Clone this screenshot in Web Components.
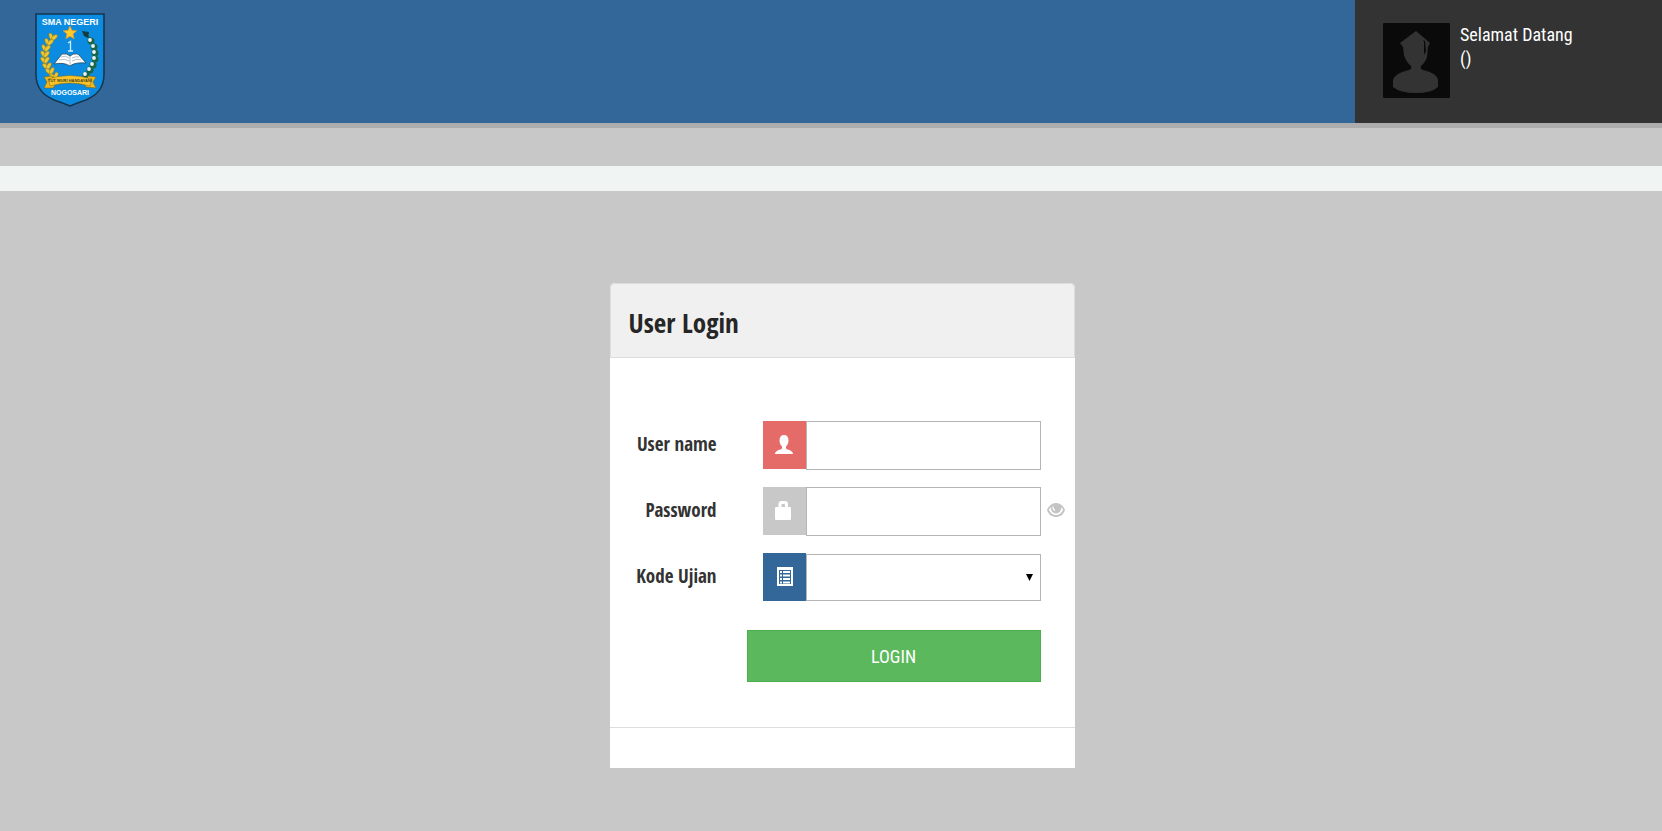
<!DOCTYPE html>
<html lang="id">
<head>
<meta charset="utf-8">
<meta name="viewport" content="width=device-width, initial-scale=1">
<title>User Login</title>
<style>
    body {
        margin: 0;
        background-color: #c8c8c8;
        color: #333;
        font-family: "Roboto Condensed", "Open Sans Condensed", sans-serif;
        font-size: 18px;
    }
</style>
</head>
<body>
<site-header>
    <school-logo></school-logo>
    <user-info slot="user">Selamat Datang<br>()</user-info>
</site-header>
<login-form></login-form>

<script>
// logo
class SchoolLogo extends HTMLElement {
    constructor() {
        super();
        this.attachShadow({ mode: 'open' });

        // wheat on the left, cotton on the right, same arc mirrored
        const spots = [[18, 23], [14, 28], [11, 34], [10, 40], [10, 46], [12, 52], [15, 57], [19, 62]];
        const wheat = spots.map(([x, y], i) => `
            <ellipse cx="${x - 2}" cy="${y}" rx="1.9" ry="3.8" transform="rotate(${-20 - i * 5} ${x} ${y})"/>
            <ellipse cx="${x + 2}" cy="${y}" rx="1.9" ry="3.8" transform="rotate(${50 - i * 4} ${x} ${y})"/>`).join('');
        const cotton = spots.slice(1).map(([x, y]) => `
            <circle cx="${70 - x}" cy="${y}" r="3.5" fill="#1b6547"/>
            <circle cx="${69 - x}" cy="${y - 1}" r="1.9" fill="#e9f4f2"/>`).join('');

        this.shadowRoot.innerHTML = `
            <style>
                :host { display: block; }
                svg { display: block; width: 70px; height: 94px; }
                text {
                    font-family: "Liberation Sans", sans-serif;
                    font-weight: bold;
                    fill: #fff;
                    text-anchor: middle;
                }
                .motto { fill: #4d431d; }
            </style>
            <svg viewBox="0 0 70 94" role="img" aria-label="SMA Negeri Nogosari">
                <path d="M1 1H69V61C69 75 62 82 51 87Q42 90 35 93Q28 90 19 87C8 82 1 75 1 61Z" fill="#0b8ce0" stroke="#17364f" stroke-width="1.6"/>
                <text x="35" y="12" font-size="9">SMA NEGERI</text>
                <path d="M19 22Q6 35 12 52Q15 60 21 66" fill="none" stroke="#a98b25"/>
                <g fill="#ecc932" stroke="#8c7320" stroke-width=".5">${wheat}</g>
                <path d="M52 22Q64 35 58 52Q55 60 49 65" fill="none" stroke="#155c3c" stroke-width="1.5"/>
                <path d="M47 18l7 1-1 6-4-2z" fill="#123d3a"/>
                ${cotton}
                <path d="M35 13l1.900 4.400 4.800.4-3.700 3.200 1.100 4.700-4.100-2.500-4.100 2.500 1.100-4.700-3.700-3.200 4.800-.4z" fill="#ffc928" stroke="#e89c1c" stroke-width=".7"/>
                <path d="M33 30l2.500-1.500v9M33 38h5" fill="none" stroke="#d5edfb" stroke-width="1.3"/>
                <path d="M19 51L27 41Q32 40 35 43Q38 40 43 41L51 50Q40 49 35 53Q29 49 19 51Z" fill="#fff" stroke="#26465b" stroke-width=".8"/>
                <path d="M35 43v9M24 47q6-2 10 1M26 44q5-2 8 1M37 48q5-3 9-1M37 45q4-2 7-1" fill="none" stroke="#8295a3" stroke-width=".6"/>
                <path d="M9 64l8-1 2 5q16-6 32 0l2-5 8 1-3 5 3 6-10-1-1-2q-15-5-30 0l-2 3-9 0 3-6z" fill="#f0b91f" stroke="#7a651c" stroke-width=".6"/>
                <path d="M13 66q22-7 44 0l-2 7q-20-6-40 0z" fill="#f7c52b" stroke="#7a651c" stroke-width=".5"/>
                <text class="motto" x="35" y="69" font-size="4">TUT WURI HANDAYANI</text>
                <text x="35" y="82" font-size="7">NOGOSARI</text>
            </svg>
        `;
    }
}
customElements.define('school-logo', SchoolLogo);

// greeting box in the right of the header
class UserInfo extends HTMLElement {
    constructor() {
        super();
        this.attachShadow({ mode: 'open' });
        this.shadowRoot.innerHTML = `
            <style>
                :host {
                    display: flex;
                    align-items: flex-start;
                    gap: 10px;
                    box-sizing: border-box;
                    width: 307px;
                    padding: 23px 28px 25px;
                    background-color: #333;
                    color: #fff;
                    line-height: 24px;
                }
                svg { flex: none; width: 67px; height: 75px; }
            </style>
            <svg viewBox="0 0 67 75" aria-hidden="true">
                <rect width="67" height="75" rx="1" fill="#0a0a0a"/>
                <path d="M33 8L47 20 45 24 44 34Q42 40 38 43Q37 46 40 47Q54 50 55 57V64Q49 70 33 70Q17 70 10 64V57Q12 50 26 47Q29 46 28 43Q23 39 21 32L20 24 17 20Z" fill="#333"/>
                <path d="M40 17l1 2v13l2-4-1-10z" fill="#0a0a0a"/>
            </svg>
            <div><slot></slot></div>
        `;
    }
}
customElements.define('user-info', UserInfo);

class SiteHeader extends HTMLElement {
    constructor() {
        super();
        this.attachShadow({ mode: 'open' });
        this.shadowRoot.innerHTML = `
            <style>
                :host { display: block; }
                header {
                    display: flex;
                    justify-content: space-between;
                    background-color: #336799;
                    border-bottom: 5px solid #adadad;
                }
                .logo { padding: 13px 35px 0; }
                .strip {
                    height: 25px;
                    margin-top: 38px;
                    background-color: #f0f5f4;
                }
            </style>
            <header>
                <div class="logo"><slot></slot></div>
                <slot name="user"></slot>
            </header>
            <div class="strip"></div>
        `;
    }
}
customElements.define('site-header', SiteHeader);

class LoginForm extends HTMLElement {
    constructor() {
        super();
        this.attachShadow({ mode: 'open' });
        this.shadowRoot.innerHTML = `
            <style>
                :host {
                    display: block;
                    padding: 92px 0 63px 22px;
                }
                * { box-sizing: border-box; }
                .panel {
                    max-width: 465px;
                    margin: 0 auto;
                    background-color: #fff;
                    border-radius: 5px 5px 0 0;
                }
                .panel-heading {
                    padding: 22px 18px 18px;
                    background-color: #f0f0f0;
                    border: 1px solid #ddd;
                    border-radius: 5px 5px 0 0;
                }
                h1, label {
                    font-family: "Open Sans Condensed", "Roboto Condensed", sans-serif;
                    font-weight: bold;
                }
                h1 {
                    margin: 0;
                    font-size: 27px;
                    line-height: 33px;
                    color: #262626;
                }
                form {
                    display: grid;
                    grid-template-columns: 107px minmax(0, 1fr) 34px;
                    row-gap: 17px;
                    padding: 63px 0 45px;
                    border-bottom: 1px solid #ddd;
                }
                .row {
                    display: grid;
                    grid-template-columns: subgrid;
                    grid-column: 1 / -1;
                    align-items: center;
                }
                label {
                    padding-bottom: 3px;
                    font-size: 19px;
                    text-align: right;
                    white-space: nowrap;
                }
                .group {
                    display: flex;
                    padding-left: 46px;
                }
                .addon {
                    display: flex;
                    flex: none;
                    align-items: center;
                    justify-content: center;
                    width: 43px;
                    height: 48px;
                }
                .user { background-color: #e56b69; }
                .lock { background-color: #c8c8c8; }
                .list { background-color: #336799; }
                svg { display: block; width: 20px; height: 20px; }
                input, select {
                    flex: 1;
                    min-width: 0;
                    height: 49px;
                    margin: 0;
                    padding: 6px 12px;
                    border: 1px solid #b5b5b5;
                    border-radius: 0;
                    background-color: #fff;
                    font: inherit;
                }
                .pick { display: grid; flex: 1; align-items: center; }
                .pick > * { grid-area: 1 / 1; }
                select { appearance: none; align-self: end; width: 100%; height: 47px; }
                .pick svg {
                    justify-self: end;
                    width: 7px;
                    height: 7px;
                    margin-right: 8px;
                    pointer-events: none;
                }
                .eye {
                    padding: 0 0 2px;
                    margin-left: 5px;
                    border: 0;
                    background: none;
                    justify-self: start;
                    cursor: pointer;
                }
                .login {
                    grid-column: 2;
                    height: 52px;
                    margin: 12px 0 0 30px;
                    border: 1px solid #4cae4c;
                    background-color: #5cb85c;
                    color: #fff;
                    font: inherit;
                    cursor: pointer;
                }
                .panel-footer { height: 40px; }
            </style>
            <div class="panel">
                <div class="panel-heading"><h1>User Login</h1></div>
                <form>
                    <div class="row">
                        <label for="username">User name</label>
                        <div class="group">
                            <span class="addon user">
                                <svg viewBox="0 0 20 20" aria-hidden="true"><path d="M10 0C7 0 5.500 2 5.500 5.500C5.500 8 6.500 10 8 11.500V13.500C7 15 1 15 1 19H19C19 15 13 15 12 13.500V11.500C13.500 10 14.500 8 14.500 5.500C14.500 2 13 0 10 0Z" fill="#fff"/></svg>
                            </span>
                            <input type="text" id="username" name="username">
                        </div>
                    </div>
                    <div class="row">
                        <label for="password">Password</label>
                        <div class="group">
                            <span class="addon lock">
                                <svg viewBox="0 0 20 20" aria-hidden="true"><path d="M4.500 6V3Q4.500 0 7.500 0H11Q14 0 14 3V6H16Q17 6 17 7V18Q17 19 16 19H2Q1 19 1 18V7Q1 6 2 6ZM7.500 6H11V4Q11 3 10 3H8.500Q7.500 3 7.500 4Z" fill="#fff"/></svg>
                            </span>
                            <input type="password" id="password" name="password">
                        </div>
                        <button type="button" class="eye" aria-label="Lihat password">
                            <svg viewBox="0 0 20 20" aria-hidden="true"><path fill-rule="evenodd" d="M10 2C5 2 2 6 1 9C3 14 6 16 10 16C14 16 17 14 19 9C18 6 15 2 10 2ZM4.500 6Q5 12 10 12.500Q15 12 15.500 6Q17 8 17 9Q14.500 14 10 14Q5.500 14 3 9Q3 8 4.500 6Z" fill="#c4c4c4"/><path d="M7 5.500q-.5 2.500 2 4" fill="none" stroke="#fff" stroke-width="1.200"/></svg>
                        </button>
                    </div>
                    <div class="row">
                        <label for="kode">Kode Ujian</label>
                        <div class="group">
                            <span class="addon list">
                                <svg viewBox="0 0 20 20" aria-hidden="true"><path d="M3 0H19V19H3Z" fill="#fff"/><path d="M5 3H17V17H5Z" fill="#336799"/><path d="M6 5h2M9 5h7M6 8.500h2M9 8.500h7M6 12h2M9 12h7M6 15.500h2M9 15.500h7" stroke="#fff" stroke-width="1.800"/></svg>
                            </span>
                            <div class="pick">
                                <select id="kode" name="kode"><option value=""></option></select>
                                <svg viewBox="0 0 7 7" aria-hidden="true"><path d="M0 0H7L3.500 7Z"/></svg>
                            </div>
                        </div>
                    </div>
                    <button type="submit" class="login">LOGIN</button>
                </form>
                <div class="panel-footer"></div>
            </div>
        `;
    }
}
customElements.define('login-form', LoginForm);
</script>
</body>
</html>
